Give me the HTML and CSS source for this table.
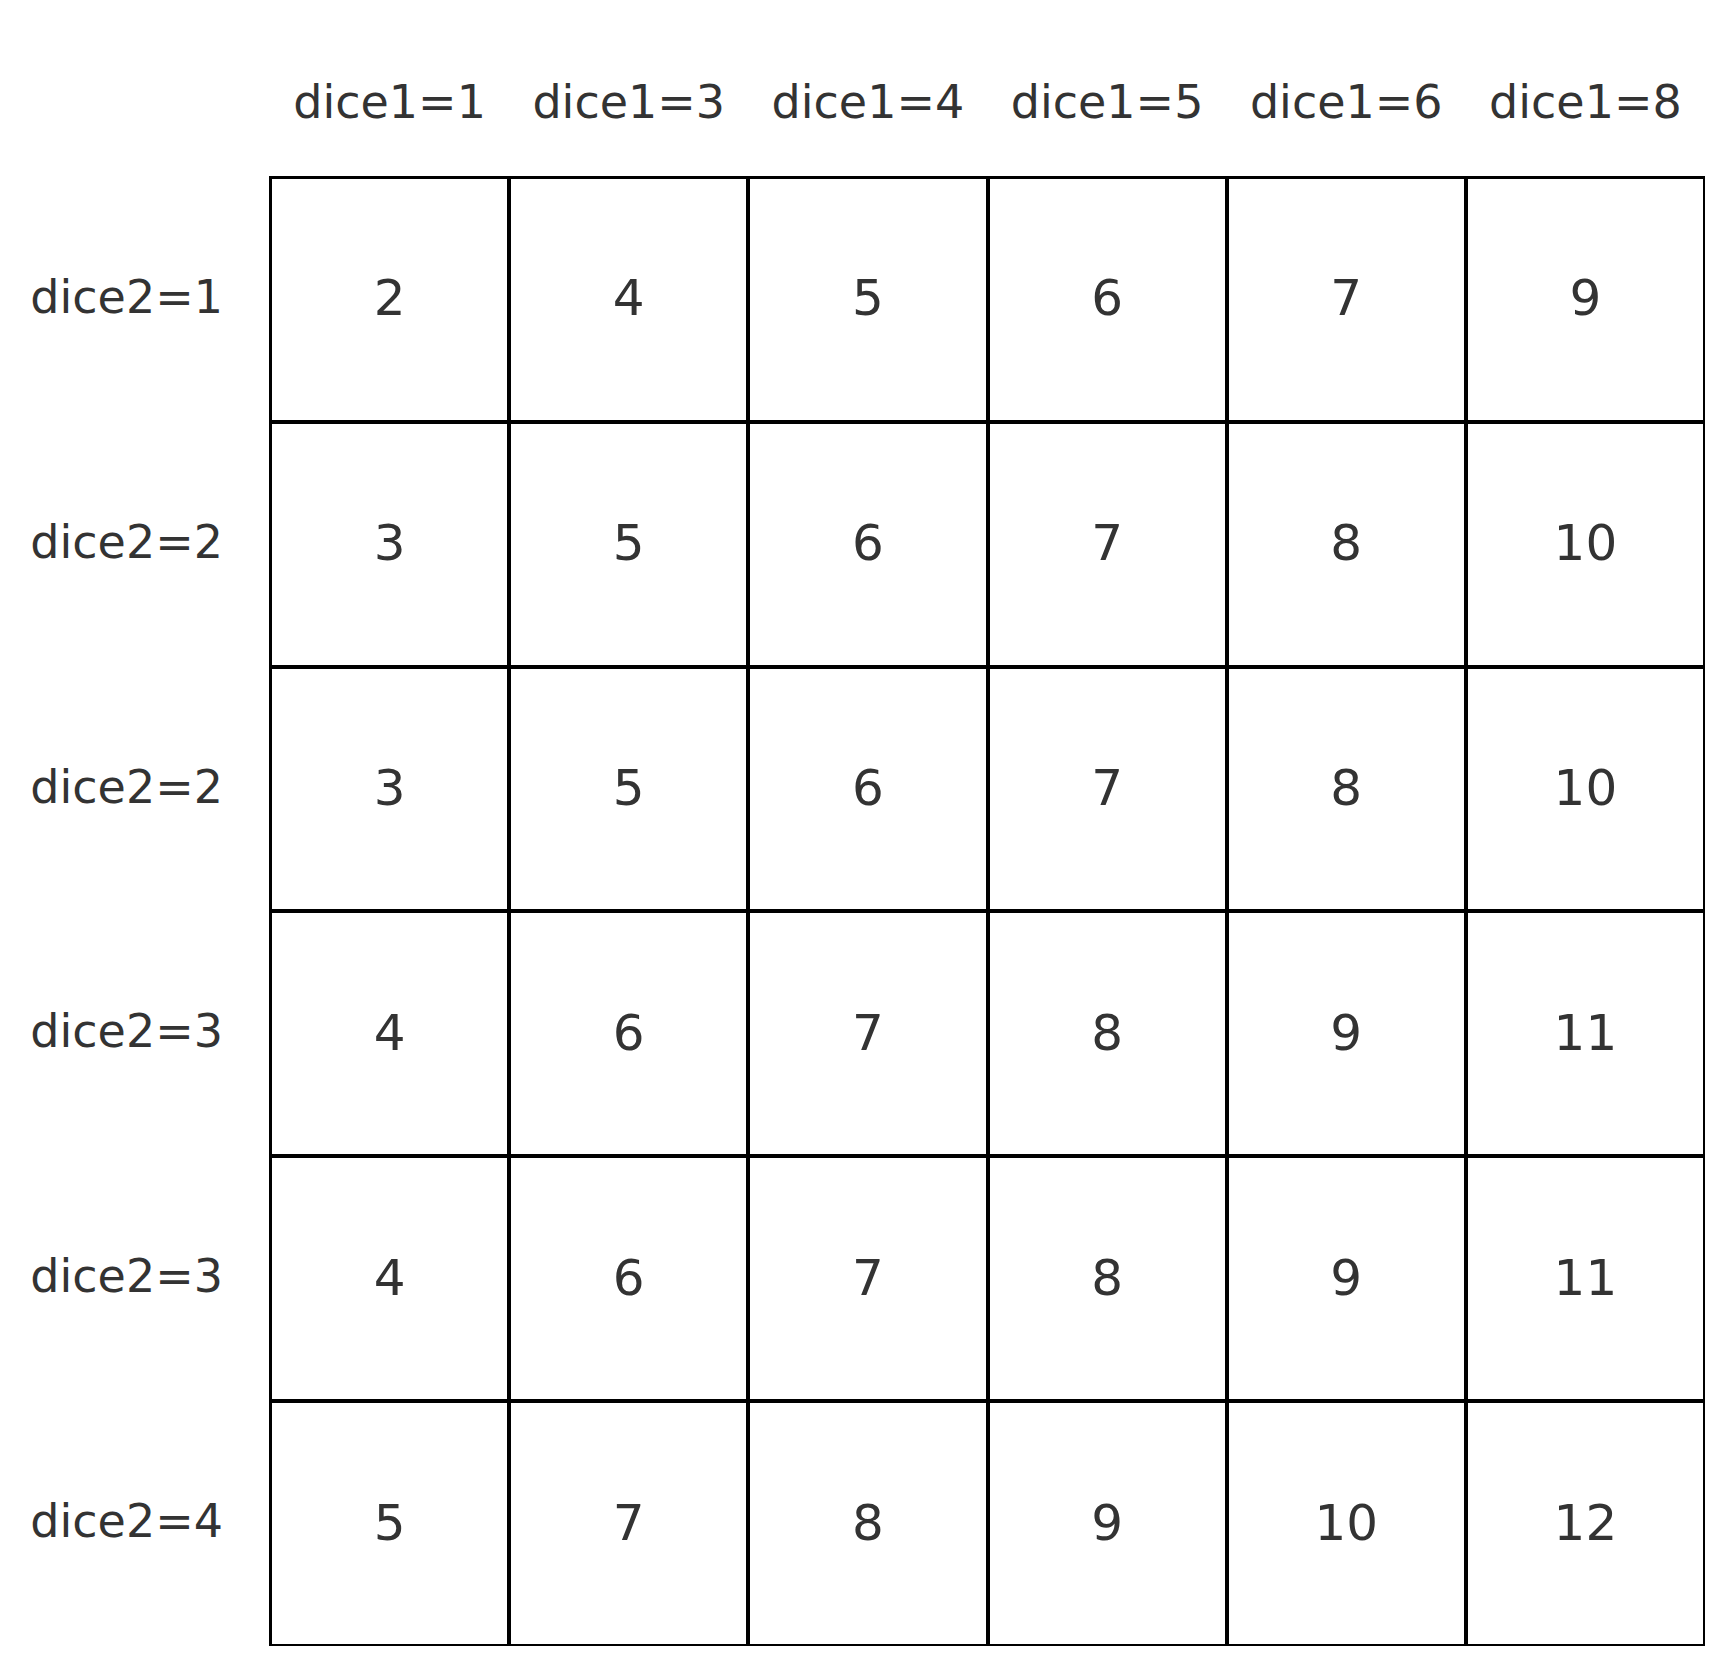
FILE: index.html
```html
<!DOCTYPE html>
<html>
<head>
<meta charset="utf-8">
<link rel="stylesheet" href="styles.css">
</head>
<body>
<div class="chart">
  <div class="corner"></div>
  <div class="col-heads">
    <div class="col-head">dice1=1</div>
    <div class="col-head">dice1=3</div>
    <div class="col-head">dice1=4</div>
    <div class="col-head">dice1=5</div>
    <div class="col-head">dice1=6</div>
    <div class="col-head">dice1=8</div>
  </div>
  <div class="row-heads">
    <div class="row-head">dice2=1</div>
    <div class="row-head">dice2=2</div>
    <div class="row-head">dice2=2</div>
    <div class="row-head">dice2=3</div>
    <div class="row-head">dice2=3</div>
    <div class="row-head">dice2=4</div>
  </div>
  <div class="grid">
    <div class="cell">2</div><div class="cell">4</div><div class="cell">5</div><div class="cell">6</div><div class="cell">7</div><div class="cell">9</div>
    <div class="cell">3</div><div class="cell">5</div><div class="cell">6</div><div class="cell">7</div><div class="cell">8</div><div class="cell">10</div>
    <div class="cell">3</div><div class="cell">5</div><div class="cell">6</div><div class="cell">7</div><div class="cell">8</div><div class="cell">10</div>
    <div class="cell">4</div><div class="cell">6</div><div class="cell">7</div><div class="cell">8</div><div class="cell">9</div><div class="cell">11</div>
    <div class="cell">4</div><div class="cell">6</div><div class="cell">7</div><div class="cell">8</div><div class="cell">9</div><div class="cell">11</div>
    <div class="cell">5</div><div class="cell">7</div><div class="cell">8</div><div class="cell">9</div><div class="cell">10</div><div class="cell">12</div>
  </div>
</div>
</body>
</html>
```

FILE: styles.css
```css
html, body {
  margin: 0;
  padding: 0;
  background: #fff;
}
body {
  font-family: "DejaVu Sans", "Liberation Sans", sans-serif;
  font-size: 46px;
  color: #333;
}
.chart {
  display: grid;
  grid-template-columns: 269px 1436px;
  grid-template-rows: 176px 1470px;
}
.col-heads {
  display: grid;
  grid-template-columns: repeat(6, 1fr);
  column-gap: 4px;
  padding: 0 2px 0 3px;
  align-items: start;
}
.col-head {
  text-align: center;
  padding-top: 75px;
  white-space: nowrap;
}
.row-heads {
  display: grid;
  grid-template-rows: repeat(6, 1fr);
  row-gap: 4px;
  padding: 3px 0 2px;
}
.row-head {
  display: flex;
  align-items: center;
  justify-content: flex-end;
  padding-right: 46px;
  padding-bottom: 5px;
  white-space: nowrap;
}
.grid {
  display: grid;
  grid-template-columns: repeat(6, 1fr);
  grid-template-rows: repeat(6, 1fr);
  gap: 4px;
  background: #000;
  border-style: solid;
  border-color: #000;
  border-width: 3px 2px 2px 3px;
}
.cell {
  background: #fff;
  display: flex;
  align-items: center;
  justify-content: center;
  font-size: 50px;
  padding-bottom: 2px;
}
```
